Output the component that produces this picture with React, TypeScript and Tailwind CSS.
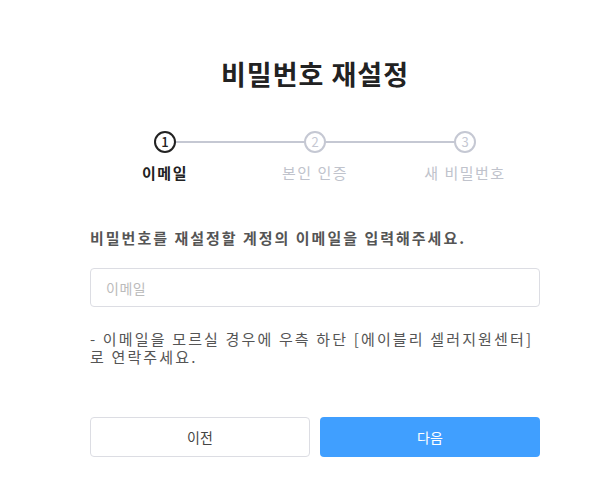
export default function App() {
  const steps = [
    { n: 1, label: "이메일", active: true },
    { n: 2, label: "본인 인증", active: false },
    { n: 3, label: "새 비밀번호", active: false },
  ];

  return (
    <div className="min-h-[494px] w-[590px] bg-white font-['Noto_Sans_CJK_KR','Noto_Sans',sans-serif]">
      <div className="ml-[90px] w-[450px] pt-[56px]">
        <h1 className="text-center text-[27px] font-bold leading-[36px] tracking-[1px] text-[#222]">
          비밀번호 재설정
        </h1>

        {/* stepper */}
        <div className="mt-[39px] grid grid-cols-3">
          {steps.map((s, i) => (
            <div key={s.n} className="flex flex-col items-center">
              <div className="relative flex h-[22px] w-full items-center justify-center">
                {i > 0 && (
                  <div className="absolute left-0 right-1/2 top-[10px] h-[2px] bg-[#c5c8d3]" />
                )}
                {i < steps.length - 1 && (
                  <div className="absolute left-1/2 right-0 top-[10px] h-[2px] bg-[#c5c8d3]" />
                )}
                <div
                  className={
                    s.active
                      ? "relative z-10 flex h-[22px] w-[22px] items-center justify-center rounded-full border-2 border-[#222] bg-white text-[13px] font-medium text-[#222]"
                      : "relative z-10 flex h-[22px] w-[22px] items-center justify-center rounded-full border-2 border-[#c5c8d3] bg-white text-[13px] text-[#c5c8d3]"
                  }
                >
                  {s.n}
                </div>
              </div>
              <div
                className={
                  s.active
                    ? "mt-[9px] text-[15px] font-bold leading-[22px] tracking-[1.5px] text-[#222]"
                    : "mt-[9px] text-[15px] leading-[22px] tracking-[1.5px] text-[#c0c3cc]"
                }
              >
                {s.label}
              </div>
            </div>
          ))}
        </div>

        <p className="mt-[43px] text-[15px] font-bold leading-[22px] tracking-[2px] text-[#555]">
          비밀번호를 재설정할 계정의 이메일을 입력해주세요.
        </p>

        <input
          placeholder="이메일"
          className="mt-[19px] block h-[39px] w-full rounded-[4px] border border-[#dcdde3] px-[15px] text-[14px] tracking-[0.5px] text-[#333] outline-none placeholder:text-[#bbb]"
        />

        <p className="mt-[23px] text-[15px] leading-[18px] tracking-[2.15px] text-[#555]">
          - 이메일을 모르실 경우에 우측 하단 [에이블리 셀러지원센터]
          <br />로 연락주세요.
        </p>

        <div className="mt-[51px] grid grid-cols-2 gap-[10px]">
          <button className="h-[40px] rounded-[4px] border border-[#dcdde3] bg-white text-[14px] text-[#444]">
            이전
          </button>
          <button className="h-[40px] rounded-[4px] bg-[#409fff] text-[14px] text-white">
            다음
          </button>
        </div>
      </div>
    </div>
  );
}
